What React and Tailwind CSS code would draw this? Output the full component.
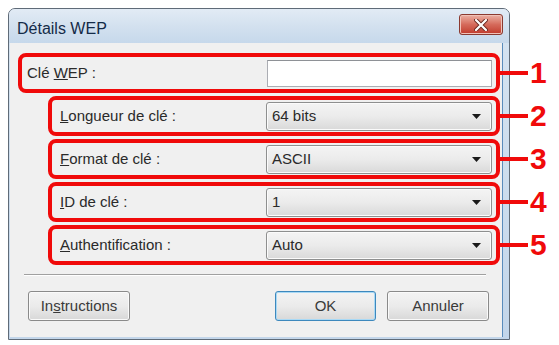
import React from "react";

function Arrow() {
  return (
    <svg width="9" height="5" viewBox="0 0 9 5" className="block">
      <path d="M0 0 L9 0 L4.5 5 Z" fill="#1a1a1a" />
    </svg>
  );
}

function Combo({ value }) {
  return (
    <div className="w-[226px] h-[29px] mr-[4px] rounded-[3px] border border-[#8e8f8f] bg-gradient-to-b from-[#f4f4f4] via-[#ebebeb] to-[#d9d9d9] flex items-center justify-between pl-[5px] pr-[10px] shadow-[inset_0_0_0_1px_#fbfbfb]">
      <span className="text-[15px] text-[#2a2a2a]">{value}</span>
      <Arrow />
    </div>
  );
}

function Row({ indent, label, children, num }) {
  return (
    <div className={`flex items-center ${indent ? "ml-[38px]" : "ml-[8px]"}`}>
      <div
        className={`${indent ? "w-[452px] pl-[8px]" : "w-[482px] pl-[5px]"} h-[40px] border-[4px] border-[#f00a0a] rounded-[8px] flex items-center justify-between shrink-0`}
      >
        <span className="text-[15px] text-[#2a2a2a]">{label}</span>
        {children}
      </div>
      <div className="w-[28px] h-[4px] bg-[#f00a0a] shrink-0" />
      <span className="ml-[2px] text-[30px] leading-none font-bold text-[#f00a0a]">{num}</span>
    </div>
  );
}

function Btn({ children, def, w }) {
  return (
    <div
      className={`${w} h-[30px] rounded-[3px] border ${def ? "border-[#3d88bd] shadow-[inset_0_0_0_1px_#a9d9f5]" : "border-[#8a8a8a] shadow-[inset_0_0_0_1px_#fafafa]"} bg-gradient-to-b from-[#f3f3f3] via-[#ebebeb] to-[#d8d8d8] flex items-center justify-center`}
    >
      <span className="text-[15px] text-[#3a3a3a]">{children}</span>
    </div>
  );
}

export default function App() {
  return (
    <div className="w-[559px] h-[345px] bg-white pt-[8px] pl-[8px] font-['Liberation_Sans',Arial,sans-serif]">
      <div className="w-[502px] h-[332px] rounded-t-[7px] border border-[#5f6b78] bg-gradient-to-b from-[#d6e4f1] to-[#c3d6ea] flex flex-col">
        <div className="h-[34px] shrink-0 flex items-start justify-between pl-[8px] pr-[6px] rounded-t-[6px] bg-gradient-to-b from-[#e2ebf5] via-[#d3e1ef] to-[#c6d8eb]">
          <span className="mt-[8px] text-[16px] text-[#142b48]">Détails WEP</span>
          <div className="mt-[5px] w-[44px] h-[21px] rounded-[3px] border border-[#8b3a30] bg-gradient-to-b from-[#eab0a4] via-[#d56a5b] to-[#c0392b] flex items-center justify-center shadow-[inset_0_0_0_1px_#f0c2b8]">
            <svg width="14" height="12" viewBox="0 0 14 12">
              <path d="M2 1 L12 11 M12 1 L2 11" stroke="#6b2a22" strokeWidth="4" strokeLinecap="round" />
              <path d="M2 1 L12 11 M12 1 L2 11" stroke="#ffffff" strokeWidth="2.2" strokeLinecap="round" />
            </svg>
          </div>
        </div>
        <div className="flex-1 ml-[1px] mr-[6px] mb-[2px] bg-[#f0f0f0] border-r border-[#5a8cbc] flex flex-col pt-[10px]">
          <Row label={<><span>Clé </span><span className="underline">W</span><span>EP :</span></>} num="1">
            <div className="w-[225px] h-[27px] mr-[4px] bg-white border border-[#abadb3] border-t-[#8e9196]" />
          </Row>
          <div className="h-[3px]" />
          <Row indent num="2" label={<><span className="underline">L</span>ongueur de clé :</>}>
            <Combo value="64 bits" />
          </Row>
          <div className="h-[3px]" />
          <Row indent num="3" label={<><span className="underline">F</span>ormat de clé :</>}>
            <Combo value="ASCII" />
          </Row>
          <div className="h-[3px]" />
          <Row indent num="4" label={<><span className="underline">I</span>D de clé :</>}>
            <Combo value="1" />
          </Row>
          <div className="h-[3px]" />
          <Row indent num="5" label={<><span className="underline">A</span>uthentification :</>}>
            <Combo value="Auto" />
          </Row>
          <div className="ml-[14px] mt-[9px] w-[462px] h-[2px] border-t border-[#a0a0a0] border-b border-b-white" />
          <div className="mt-[15px] flex items-center ml-[18px]">
            <Btn w="w-[102px]">In<span className="underline">s</span>tructions</Btn>
            <div className="ml-[145px] flex gap-[11px]">
              <Btn def w="w-[101px]">OK</Btn>
              <Btn w="w-[102px]">Annuler</Btn>
            </div>
          </div>
        </div>
      </div>
    </div>
  );
}
